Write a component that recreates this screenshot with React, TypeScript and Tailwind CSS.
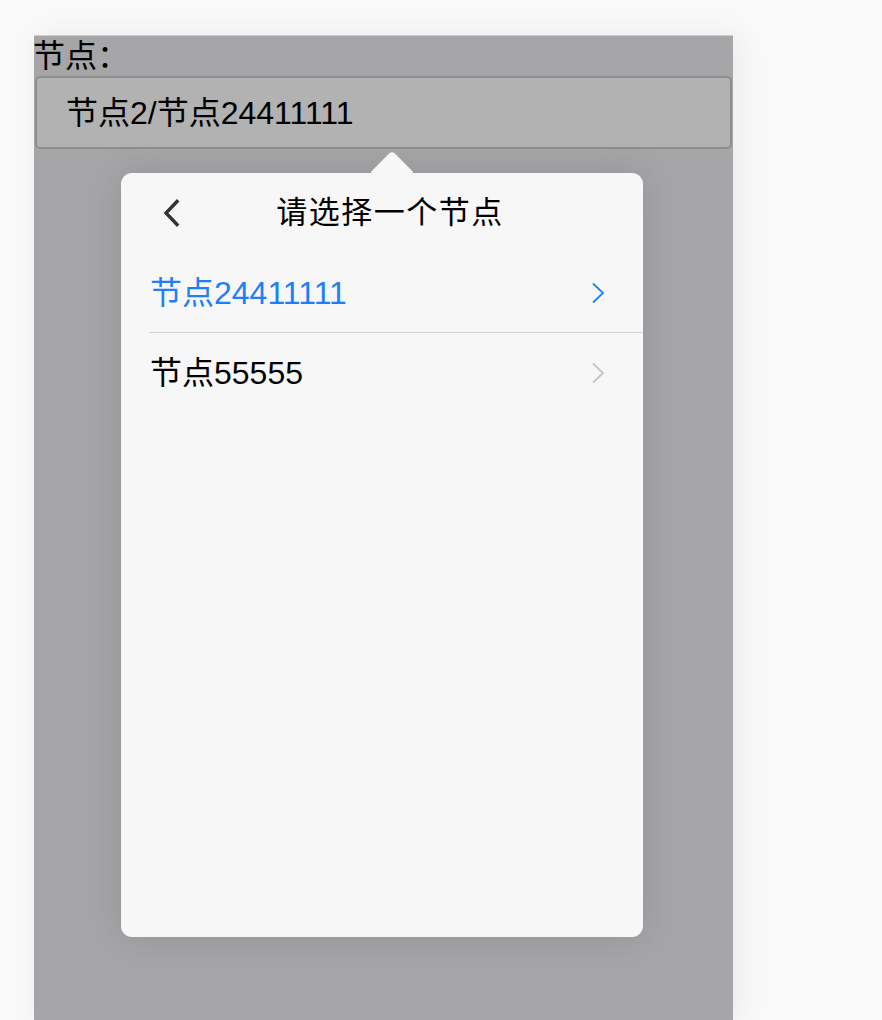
import { useState } from "react";

type NodeItem = { id: string; name: string };

const nodes: NodeItem[] = [
    { id: "n24411111", name: "节点24411111" },
    { id: "n55555", name: "节点55555" },
];

const font = "font-['Liberation_Sans','Noto_Sans_CJK_SC',sans-serif]";

function BackIcon() {
    return (
        <svg width="20" height="28" viewBox="0 0 20 28" fill="none">
            <path d="M15 2.5 L4 14 L15 25.5" stroke="#333333" strokeWidth="3.4" strokeLinecap="square" />
        </svg>
    );
}

function ChevronRight({ color }: { color: string }) {
    return (
        <svg width="14" height="22" viewBox="0 0 14 22" fill="none">
            <path d="M2 1.5 L12 11 L2 20.5" stroke={color} strokeWidth="1.8" />
        </svg>
    );
}

export default function App() {
    const [selected, setSelected] = useState("n24411111");

    return (
        <div className={`min-h-[1020px] bg-[#f9f9f9] pl-[34px] pt-[35px] overflow-hidden ${font}`}>
            <div className="w-[699px] h-[990px] bg-[#a6a6a8] border-t border-[#cfcfcf] shadow-[6px_0_30px_rgba(0,0,0,0.06)]">
                <div className="text-[32px] leading-[40px] text-black -ml-px">节点：</div>
                <div className="mx-px h-[73px] rounded-[5px] border-2 border-[#8e8e8f] bg-[#b2b2b2] flex items-center pl-[29px] text-[32px] text-black">
                    节点2/节点24411111
                </div>
                {/* popover */}
                <div className="relative mt-[24px] ml-[87px] w-[522px] h-[764px] rounded-[11px] bg-[#f7f7f7] shadow-[0_0_40px_rgba(0,0,0,0.12)]">
                    <div className="absolute left-[256px] -top-[16px] w-[30px] h-[30px] rotate-45 rounded-tl-[4px] bg-[#f7f7f7]" />
                    <div className="relative h-[80px] flex items-center">
                        <button className="ml-[41px] w-[24px] flex items-center">
                            <BackIcon />
                        </button>
                        <div className="absolute left-0 right-0 pl-[16px] text-center text-[31px] tracking-[1.5px] text-black pointer-events-none">
                            请选择一个节点
                        </div>
                    </div>
                    <ul className="ml-[28px]">
                        {nodes.map((n, i) => {
                            const active = n.id === selected;
                            return (
                                <li
                                    key={n.id}
                                    onClick={() => setSelected(n.id)}
                                    className={`h-[80px] flex items-center justify-between pl-px pr-[38px] cursor-pointer ${i < nodes.length - 1 ? "border-b border-[#d4d4d6]" : ""}`}
                                >
                                    <span className={`text-[32px] ${active ? "text-[#1e80f8]" : "text-black"}`}>{n.name}</span>
                                    <ChevronRight color={active ? "#1e80f8" : "#c4c4c8"} />
                                </li>
                            );
                        })}
                    </ul>
                </div>
            </div>
        </div>
    );
}
